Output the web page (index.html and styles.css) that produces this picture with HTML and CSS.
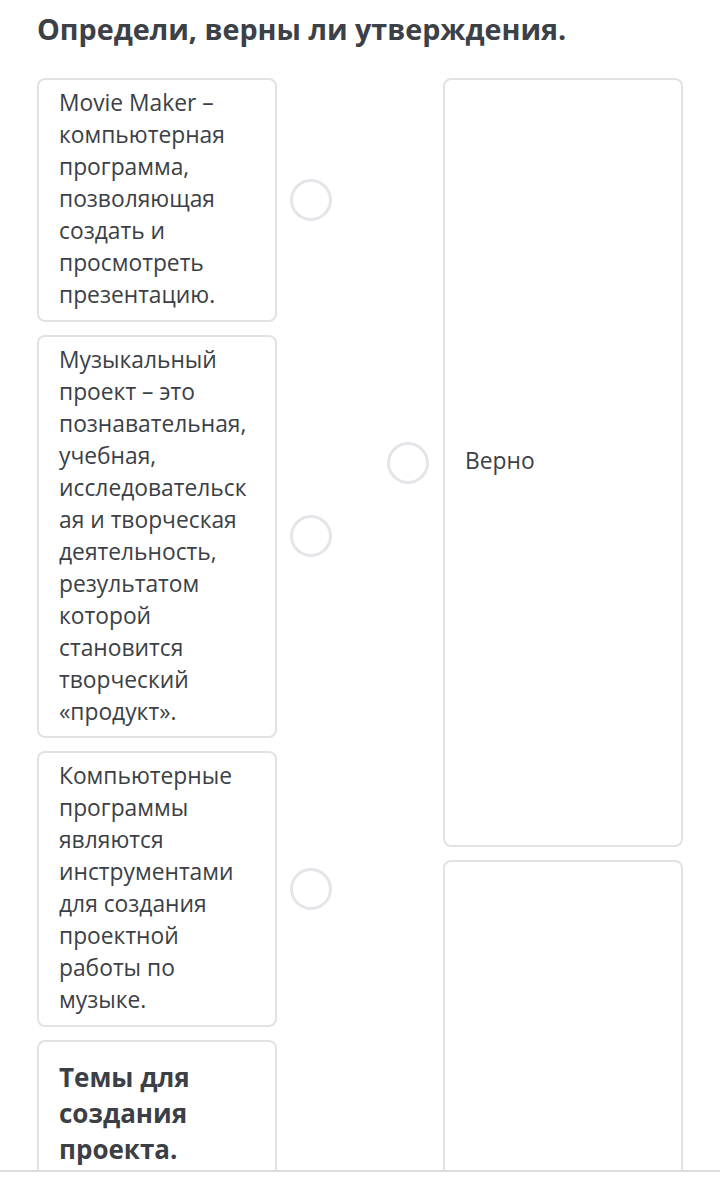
FILE: index.html
```html
<!DOCTYPE html>
<html lang="ru">
<head>
<meta charset="utf-8">
<link rel="stylesheet" href="styles.css">
</head>
<body>
<div class="page">
  <h1 class="title">Определи, верны ли утверждения.</h1>
  <div class="board">
    <div class="col col-left">
      <div class="row">
        <div class="card">Movie Maker – компьютерная программа, позволяющая создать и просмотреть презентацию.</div>
        <span class="dot"></span>
      </div>
      <div class="row">
        <div class="card">Музыкальный проект – это познавательная, учебная, исследовательская и творческая деятельность, результатом которой становится творческий «продукт».</div>
        <span class="dot"></span>
      </div>
      <div class="row">
        <div class="card">Компьютерные программы являются инструментами для создания проектной работы по музыке.</div>
        <span class="dot"></span>
      </div>
      <div class="row">
        <div class="card card-head">Темы для создания проекта.</div>
        <span class="dot dot-hidden"></span>
      </div>
    </div>
    <div class="col col-right">
      <div class="row row-true">
        <span class="dot"></span>
        <div class="card card-answer">Верно</div>
      </div>
      <div class="row row-false">
        <span class="dot dot-hidden"></span>
        <div class="card card-answer"></div>
      </div>
    </div>
  </div>
</div>
</body>
</html>
```

FILE: styles.css
```css
* { box-sizing: border-box; }
html, body { margin: 0; padding: 0; background: #ffffff; }
body {
  font-family: "Open Sans", "Noto Sans", sans-serif;
  color: #3c3f45;
}
.page {
  height: 1172px;
  overflow: hidden;
  border-bottom: 2px solid #dcdcdc;
  padding: 11px 37px 0;
}
.title {
  margin: 0;
  font-size: 28.7px;
  line-height: 36px;
  font-weight: 700;
  color: #3c4047;
}
.board {
  margin-top: 31px;
  display: flex;
  justify-content: space-between;
  align-items: flex-start;
}
.col {
  display: flex;
  flex-direction: column;
  gap: 13px;
}
.row {
  display: flex;
  align-items: center;
  gap: 13px;
}
.col-right .row { gap: 14px; }
.card {
  width: 240px;
  border: 2px solid #e2e2e2;
  border-radius: 8px;
  padding: 7px 20px 8.5px;
  font-size: 22.8px;
  line-height: 32px;
  overflow-wrap: anywhere;
  background: #fff;
}
.card-head {
  font-weight: 700;
  font-size: 26px;
  line-height: 36px;
  padding: 17px 20px 30px;
}
.card-answer {
  height: 769px;
  display: flex;
  align-items: center;
  padding: 0 20px 3px;
}
.row-false .card-answer { height: 400px; }
.dot {
  flex: none;
  width: 42px;
  height: 42px;
  border: 3px solid #e3e5e8;
  border-radius: 50%;
}
.dot-hidden { visibility: hidden; }
```
